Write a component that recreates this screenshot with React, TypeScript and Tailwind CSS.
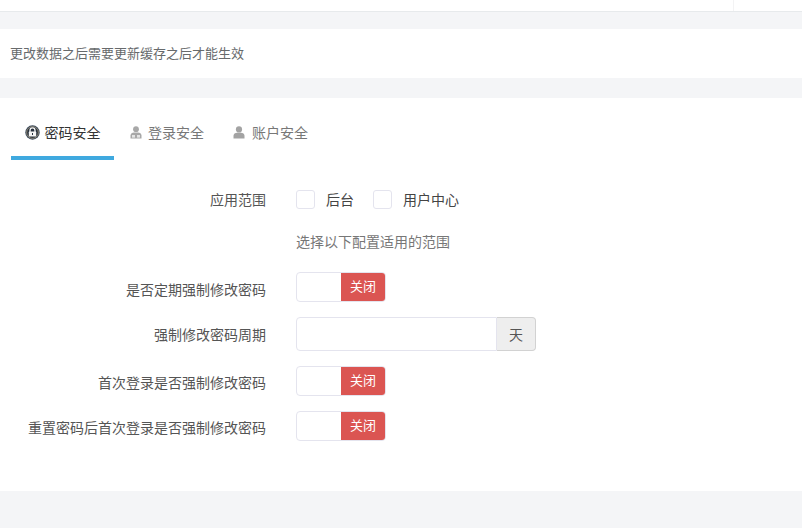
const font = { fontFamily: '"Noto Sans CJK SC", "Liberation Sans", sans-serif' };

const LockIcon = () => (
  <svg width="15" height="15" viewBox="0 0 15 15" className="shrink-0">
    <circle cx="7.5" cy="7.5" r="7.2" fill="#3b4a5c" />
    <circle cx="7.5" cy="7.5" r="5.8" fill="#26303d" stroke="#c9b48a" strokeWidth="0.6" />
    <path d="M5 7V5.4a2.5 2.5 0 0 1 5 0V7" fill="none" stroke="#f4f4f4" strokeWidth="1.3" />
    <rect x="3.8" y="6.6" width="7.4" height="5" rx="0.6" fill="#f4f4f4" />
    <rect x="7" y="8" width="1" height="2" fill="#26303d" />
  </svg>
);

const AdminIcon = () => (
  <svg width="12" height="13" viewBox="0 0 12 13" className="shrink-0">
    <circle cx="6" cy="3.2" r="2.9" fill="#a8a8a8" />
    <path d="M0.5 12.5V9.6C0.5 7.8 2.2 6.6 4 6.6h4c1.8 0 3.5 1.2 3.5 3v2.9z" fill="#a8a8a8" />
    <rect x="2" y="9" width="3" height="2.6" fill="#e4e4e4" />
    <rect x="7" y="9" width="3" height="2.6" fill="#e4e4e4" />
  </svg>
);

const UserIcon = () => (
  <svg width="12" height="13" viewBox="0 0 12 13" className="shrink-0">
    <circle cx="6" cy="3.4" r="3.1" fill="#a3a3a3" />
    <path d="M0.5 12.5V9.8C0.5 7.9 2.2 6.8 4 6.8h4c1.8 0 3.5 1.1 3.5 3v2.7z" fill="#a3a3a3" />
  </svg>
);

const Toggle = () => (
  <div className="flex h-[30px] w-[90px] overflow-hidden rounded-[4px] border border-[#e4e4ee] bg-white">
    <div className="w-[44px]" />
    <div className="flex flex-1 items-center justify-center bg-[#db5552] pb-[2px] text-[13px] text-white">关闭</div>
  </div>
);

const Row = ({
  label,
  className,
  labelClass = "",
  children,
}: {
  label?: string;
  className: string;
  labelClass?: string;
  children: React.ReactNode;
}) => (
  <div className={`flex items-center ${className}`}>
    <div className={`w-[266px] shrink-0 text-right text-[#555] ${labelClass}`}>{label}</div>
    <div className="ml-[30px] flex items-center">{children}</div>
  </div>
);

const App = () => {
  return (
    <div style={font} className="flex h-[528px] w-[802px] flex-col overflow-hidden bg-[#f4f5f7] text-[14px]">
      <div className="flex h-[12px] shrink-0 justify-end border-b border-[#e7eaec] bg-white pr-[68px]">
        <div className="w-px bg-[#f3f3f4]" />
      </div>
      <div className="mt-[17px] flex h-[49px] shrink-0 items-center bg-white pb-[1px] pl-[10px] text-[13px] text-[#676a6c]">
        更改数据之后需要更新缓存之后才能生效
      </div>
      <div className="mt-[20px] h-[393px] shrink-0 bg-white">
        <div className="flex h-[62px] items-stretch pl-[11px]">
          <div className="flex w-[103px] items-center justify-center gap-[5px] border-b-4 border-[#3fa9df] pt-[10px] text-[#333]">
            <LockIcon />
            <span>密码安全</span>
          </div>
          <div className="ml-[16px] flex items-center gap-[6px] pt-[6px] text-[#777]">
            <AdminIcon />
            <span>登录安全</span>
          </div>
          <div className="ml-[29px] flex items-center gap-[7px] pt-[6px] text-[#777]">
            <UserIcon />
            <span>账户安全</span>
          </div>
        </div>

        <Row label="应用范围" className="mt-[29px] h-[20px]">
          <div className="h-[19px] w-[19px] rounded-[3px] border border-[#e4e4ee]" />
          <span className="ml-[11px] text-[#444]">后台</span>
          <div className="ml-[19px] h-[19px] w-[19px] rounded-[3px] border border-[#e4e4ee]" />
          <span className="ml-[11px] text-[#444]">用户中心</span>
        </Row>
        <Row className="mt-[23px] h-[20px]">
          <span className="pb-[2px] text-[#777]">选择以下配置适用的范围</span>
        </Row>
        <Row label="是否定期强制修改密码" className="mt-[20px] h-[30px]" labelClass="pt-[4px]">
          <Toggle />
        </Row>
        <Row label="强制修改密码周期" className="mt-[15px] h-[34px]">
          <div className="flex h-[34px] w-[240px]">
            <div className="flex-1 rounded-l-[4px] border border-[#e4e4ee] bg-white" />
            <div className="flex w-[39px] items-center justify-center rounded-r-[4px] border border-l-0 border-[#d2d2d2] bg-[#eeeeee] text-[#555]">
              天
            </div>
          </div>
        </Row>
        <Row label="首次登录是否强制修改密码" className="mt-[15px] h-[30px]" labelClass="pt-[2px]">
          <Toggle />
        </Row>
        <Row label="重置密码后首次登录是否强制修改密码" className="mt-[15px] h-[30px]" labelClass="pt-[2px]">
          <Toggle />
        </Row>
      </div>
    </div>
  );
};

export default App;
